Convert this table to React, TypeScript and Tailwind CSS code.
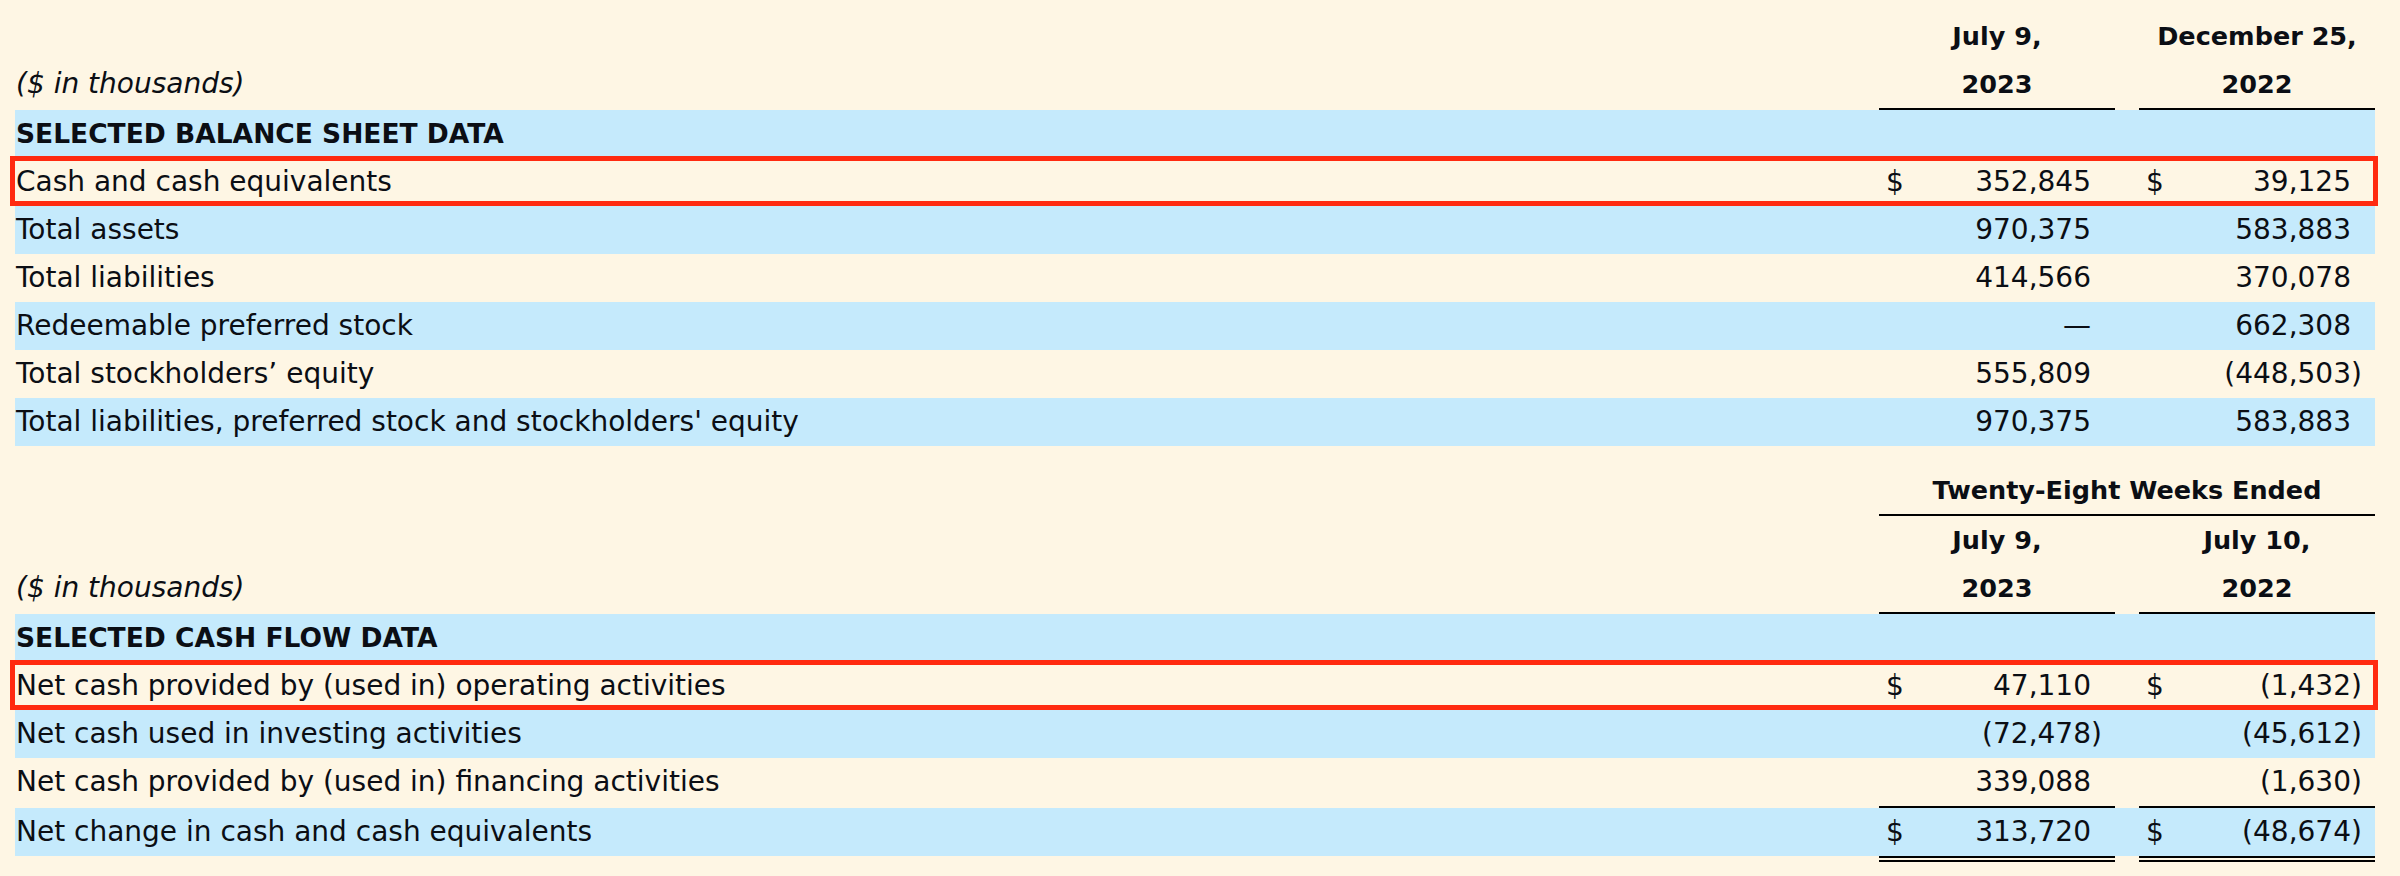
import React from 'react';

type Row = {
  label: string;
  kind: 'section' | 'data';
  a?: string;
  b?: string;
  dollar?: boolean;
  blue?: boolean;
  highlight?: boolean;
};

const balanceRows: Row[] = [
  { label: 'SELECTED BALANCE SHEET DATA', kind: 'section', blue: true },
  { label: 'Cash and cash equivalents', kind: 'data', a: '352,845', b: '39,125', dollar: true, highlight: true },
  { label: 'Total assets', kind: 'data', a: '970,375', b: '583,883', blue: true },
  { label: 'Total liabilities', kind: 'data', a: '414,566', b: '370,078' },
  { label: 'Redeemable preferred stock', kind: 'data', a: '\u2014', b: '662,308', blue: true },
  { label: 'Total stockholders\u2019 equity', kind: 'data', a: '555,809', b: '(448,503)' },
  { label: "Total liabilities, preferred stock and stockholders' equity", kind: 'data', a: '970,375', b: '583,883', blue: true },
];

const cashRows: Row[] = [
  { label: 'SELECTED CASH FLOW DATA', kind: 'section', blue: true },
  { label: 'Net cash provided by (used in) operating activities', kind: 'data', a: '47,110', b: '(1,432)', dollar: true, highlight: true },
  { label: 'Net cash used in investing activities', kind: 'data', a: '(72,478)', b: '(45,612)', blue: true },
  { label: 'Net cash provided by (used in) financing activities', kind: 'data', a: '339,088', b: '(1,630)' },
];

function Amount({ value, dollar }: { value?: string; dollar?: boolean }) {
  const neg = !!value && value.startsWith('(');
  const main = neg && value ? value.slice(0, -1) : value;
  return (
    <div className="flex h-full w-[236px] items-center pl-[7px]">
      <span className="w-[20px]">{dollar ? '$' : ''}</span>
      <span className="flex-1 text-right">{main}</span>
      <span className="w-[24px] text-left">{neg ? ')' : ''}</span>
    </div>
  );
}

function DataRow({ row }: { row: Row }) {
  const bg = row.blue ? 'bg-[#c5eafc]' : '';
  if (row.kind === 'section') {
    return (
      <div className={`flex h-[48px] items-center ${bg}`}>
        <div className="flex-1 pl-[1px] text-[26.5px] font-bold leading-none">{row.label}</div>
      </div>
    );
  }
  return (
    <div className={`relative flex h-[48px] items-center ${bg}`}>
      <div className="flex-1 pl-[1px]">{row.label}</div>
      <Amount value={row.a} dollar={row.dollar} />
      <div className="w-[24px]" />
      <Amount value={row.b} dollar={row.dollar} />
      {row.highlight && (
        <div className="pointer-events-none absolute -left-[5px] -right-[3px] -top-[2px] bottom-0 border-[5px] border-[#ff2a10]" />
      )}
    </div>
  );
}

function Rule({ full, double }: { full?: boolean; double?: boolean }) {
  const line = double ? 'h-[6px] border-y-2 border-black' : 'h-[2px] bg-black';
  return (
    <div className="flex">
      <div className="flex-1" />
      {full ? (
        <div className={`w-[496px] ${line}`} />
      ) : (
        <>
          <div className={`w-[236px] ${line}`} />
          <div className="w-[24px]" />
          <div className={`w-[236px] ${line}`} />
        </>
      )}
    </div>
  );
}

function HeaderRow({ label, a, b }: { label?: string; a: string; b: string }) {
  return (
    <div className="flex h-[48px] items-center">
      <div className="flex-1 pl-[1px] italic">{label}</div>
      <div className="w-[236px] text-center text-[25.5px] font-bold">{a}</div>
      <div className="w-[24px]" />
      <div className="w-[236px] text-center text-[25.5px] font-bold">{b}</div>
    </div>
  );
}

export default function App() {
  return (
    <div className="min-h-[876px] w-full bg-[#fef6e4] pl-[15px] pr-[25px] pt-[12px] font-['DejaVu_Sans','Liberation_Sans',sans-serif] text-[28px] text-[#0b0e14]">
      <HeaderRow a="July 9," b="December 25," />
      <HeaderRow label="($ in thousands)" a="2023" b="2022" />
      <Rule />
      {balanceRows.map((r) => (
        <DataRow key={r.label} row={r} />
      ))}

      <div className="mt-[20px] flex h-[48px] items-center">
        <div className="flex-1" />
        <div className="w-[496px] text-center text-[25.5px] font-bold">Twenty-Eight Weeks Ended</div>
      </div>
      <Rule full />
      <HeaderRow a="July 9," b="July 10," />
      <HeaderRow label="($ in thousands)" a="2023" b="2022" />
      <Rule />
      {cashRows.map((r) => (
        <DataRow key={r.label} row={r} />
      ))}
      <Rule />
      <DataRow
        row={{
          label: 'Net change in cash and cash equivalents',
          kind: 'data',
          a: '313,720',
          b: '(48,674)',
          dollar: true,
          blue: true,
        }}
      />
      <Rule double />
    </div>
  );
}
